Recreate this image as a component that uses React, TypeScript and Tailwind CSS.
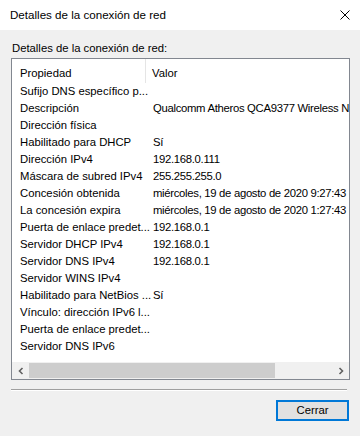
import React from "react";

const rows: [string, string][] = [
  ["Sufijo DNS específico p...", ""],
  ["Descripción", "Qualcomm Atheros QCA9377 Wireless Network Adapter"],
  ["Dirección física", ""],
  ["Habilitado para DHCP", "Sí"],
  ["Dirección IPv4", "192.168.0.111"],
  ["Máscara de subred IPv4", "255.255.255.0"],
  ["Concesión obtenida", "miércoles, 19 de agosto de 2020 9:27:43"],
  ["La concesión expira", "miércoles, 19 de agosto de 2020 1:27:43"],
  ["Puerta de enlace predet...", "192.168.0.1"],
  ["Servidor DHCP IPv4", "192.168.0.1"],
  ["Servidor DNS IPv4", "192.168.0.1"],
  ["Servidor WINS IPv4", ""],
  ["Habilitado para NetBios ...", "Sí"],
  ["Vínculo: dirección IPv6 l...", ""],
  ["Puerta de enlace predet...", ""],
  ["Servidor DNS IPv6", ""],
];

const App = () => {
  return (
    <div
      className="w-[360px] h-[436px] bg-[#f0f0f0] flex flex-col text-[11.3px] text-black overflow-hidden"
      style={{ fontFamily: '"Segoe UI", "Liberation Sans", Arial, sans-serif' }}
    >
      {/* title bar */}
      <div className="h-[30px] bg-white flex items-center justify-between pl-[10px] pr-[10px] text-[11.6px]">
        <span>Detalles de la conexión de red</span>
        <svg width="10" height="10" viewBox="0 0 10 10">
          <path d="M0.5 0.5 L9.5 9.5 M9.5 0.5 L0.5 9.5" stroke="#000" strokeWidth="1" />
        </svg>
      </div>

      <div className="flex flex-col px-[11px]">
        <div className="h-[16px] mt-[10px] mb-[2px] leading-[16px] pl-[1px]">
          Detalles de la conexión de red:
        </div>

        {/* list view */}
        <div className="w-[339px] h-[322px] border border-[#828790] bg-white flex flex-col">
          <div className="h-[24px] flex shrink-0">
            <div className="w-[134px] pl-[8px] pt-[6px] border-r border-[#e5e5e5]">Propiedad</div>
            <div className="pl-[6px] pt-[6px]">Valor</div>
          </div>
          <div className="flex-1 overflow-hidden">
            {rows.map(([k, v], i) => (
              <div key={i} className="h-[17px] flex items-center whitespace-nowrap">
                <div className="w-[134px] pl-[8px] shrink-0">{k}</div>
                <div className="pl-[7px] tracking-[-0.3px]">{v}</div>
              </div>
            ))}
          </div>
          {/* horizontal scrollbar */}
          <div className="h-[17px] flex shrink-0 bg-[#f0f0f0]">
            <div className="w-[17px] flex items-center justify-center">
              <svg width="8" height="8" viewBox="0 0 8 8">
                <path d="M5.5 1 L2.5 4 L5.5 7" stroke="#606060" strokeWidth="1.6" fill="none" />
              </svg>
            </div>
            <div className="flex-1 flex py-[1px]">
              <div className="w-[246px] bg-[#cdcdcd]" />
            </div>
            <div className="w-[17px] flex items-center justify-center">
              <svg width="8" height="8" viewBox="0 0 8 8">
                <path d="M2.5 1 L5.5 4 L2.5 7" stroke="#606060" strokeWidth="1.6" fill="none" />
              </svg>
            </div>
          </div>
        </div>

        {/* separator */}
        <div className="w-[336px] mt-[9px] border-t border-[#a0a0a0] border-b border-b-white" />

        <div className="flex justify-end mt-[9px]">
          <button className="w-[73px] h-[21px] border-2 border-[#0078d7] bg-[#e1e1e1] flex items-center justify-center leading-none">
            Cerrar
          </button>
        </div>
      </div>
    </div>
  );
};

export default App;
